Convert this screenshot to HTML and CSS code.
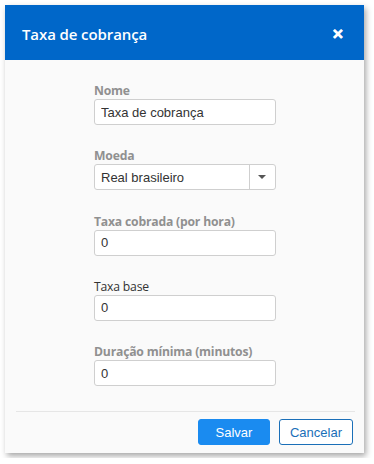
FILE: index.html
```html
<!DOCTYPE html>
<html lang="pt">
<head>
    <meta charset="UTF-8">
    <meta name="viewport" content="width=device-width, initial-scale=1.0">
    <title>Taxa de cobrança</title>
    <link rel="stylesheet" href="styles.css">
</head>
<body>

    <div class="dialog">
        <!-- cabeçalho -->
        <div class="dialog-header">
            <h1>Taxa de cobrança</h1>
            <span class="close">&#x2715;</span>
        </div>

        <!-- formulário -->
        <div class="dialog-body">
            <div class="field">
                <label class="req">Nome</label>
                <input type="text" value="Taxa de cobrança">
            </div>
            <div class="field">
                <label class="req">Moeda</label>
                <div class="select">
                    <span class="select-value">Real brasileiro</span>
                    <span class="select-arrow"></span>
                </div>
            </div>
            <div class="field">
                <label class="req">Taxa cobrada (por hora)</label>
                <input type="text" value="0">
            </div>
            <div class="field">
                <label>Taxa base</label>
                <input type="text" value="0">
            </div>
            <div class="field">
                <label class="req">Duração mínima (minutos)</label>
                <input type="text" value="0">
            </div>
        </div>

        <div class="dialog-footer">
            <button class="btn btn-primary">Salvar</button>
            <button class="btn btn-default">Cancelar</button>
        </div>
    </div>

</body>
</html>
```

FILE: styles.css
```css
body {
    margin: 0;
    padding: 5px;
    background-color: #fff;
    font-family: "Open Sans", "Noto Sans", sans-serif;
}
.dialog {
    width: 359px;
    height: 448px;
    background-color: #fafafa;
    box-shadow: 2px 3px 6px rgba(0, 0, 0, 0.35);
    display: flex;
    flex-direction: column;
}
.dialog-header {
    box-sizing: border-box;
    height: 57px;
    background-color: #0067c9;
    color: #fff;
    display: flex;
    align-items: center;
    justify-content: space-between;
    padding: 3px 20px 0 17px;
}
.dialog-header h1 {
    margin: 0;
    font-size: 15px;
    font-weight: 600;
    letter-spacing: -0.1px;
}
.close {
    font-size: 14px;
    font-weight: bold;
    margin-top: -2px;
    -webkit-text-stroke: 0.6px #fff;
}
.dialog-body {
    padding: 24px 0 0 89px;
    flex: 1;
}
.field {
    width: 182px;
    margin-bottom: 24.3px;
}
.field label {
    display: block;
    font-size: 12.2px;
    line-height: 14px;
    color: #333;
    margin-bottom: 1px;
    letter-spacing: -0.2px;
}
.field label.req {
    font-weight: bold;
    color: #909090;
}
.field input,
.select {
    box-sizing: border-box;
    width: 182px;
    height: 26px;
    border: 1px solid #cfcfcf;
    border-radius: 3px;
    background-color: #fff;
    font-family: "Liberation Sans", Arial, sans-serif;
    font-size: 13px;
    color: #333;
    padding: 0 6px;
    margin: 0;
}
.select {
    display: flex;
    align-items: center;
    padding: 0;
}
.select-value {
    flex: 1;
    padding: 0 6px;
}
.select-arrow {
    width: 25px;
    height: 24px;
    border-left: 1px solid #cfcfcf;
    position: relative;
}
.select-arrow::after {
    content: "";
    position: absolute;
    left: 8px;
    top: 10px;
    border-left: 4.5px solid transparent;
    border-right: 4.5px solid transparent;
    border-top: 4.5px solid #555;
}
.dialog-footer {
    margin: 0 9px 0 11px;
    border-top: 1px solid #e6e6e6;
    height: 43px;
    display: flex;
    justify-content: flex-end;
    align-items: center;
    gap: 9px;
    padding-right: 2px;
}
.btn {
    height: 26px;
    border-radius: 3px;
    font-family: "Liberation Sans", Arial, sans-serif;
    font-size: 13px;
    cursor: pointer;
}
.btn-primary {
    width: 72px;
    background-color: #1a8bf0;
    border: 1px solid #1a8bf0;
    color: #fff;
}
.btn-default {
    width: 74px;
    background-color: #fff;
    border: 1px solid #1a6fb8;
    color: #1a6fb8;
}
```
